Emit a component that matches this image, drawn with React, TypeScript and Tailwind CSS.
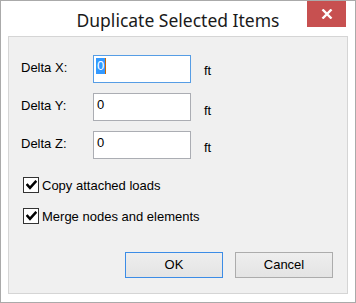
import { useState } from 'react';

const rows = [
  { label: 'Delta X:', value: '0', ftTop: 'mt-[8px]' },
  { label: 'Delta Y:', value: '0', ftTop: 'mt-[10px]' },
  { label: 'Delta Z:', value: '0', ftTop: 'mt-[9px]' },
];

const Check = () => (
  <svg width="11" height="10" viewBox="0 0 11 10" className="block">
    <path d="M1.5 5 L4 7.8 L9.5 1.8" fill="none" stroke="#000" strokeWidth="2.6" strokeLinecap="square" />
  </svg>
);

const CheckRow = ({ label, className }: { label: string; className?: string }) => {
  const [on, setOn] = useState(true);
  return (
    <label className={`flex items-center cursor-default select-none ${className ?? ''}`} onClick={() => setOn(!on)}>
      <span className="w-[16px] h-[16px] border border-[#333] bg-white flex items-center justify-center">
        {on && <Check />}
      </span>
      <span className="ml-[3px] text-[13px] leading-[15px]">{label}</span>
    </label>
  );
};

const App = () => {
  return (
    <div
      className="w-[356px] h-[303px] border border-[#aaaaaa] bg-white flex flex-col text-black relative"
      style={{ fontFamily: '"Liberation Sans", Arial, sans-serif' }}
    >
      {/* Title bar */}
      <div className="h-[35px] flex items-center justify-center">
        <span className="text-[17.5px] leading-[20px] mt-[3px] text-[#1a1a1a]" style={{ fontFamily: '"Noto Sans", sans-serif' }}>
          Duplicate Selected Items
        </span>
      </div>
      <button className="absolute top-0 right-[9px] w-[39px] h-[26px] bg-[#c75050] flex items-center justify-center">
        <svg width="12" height="10" viewBox="0 0 12 10">
          <path d="M1.5 0.5 L10.5 9.5 M10.5 0.5 L1.5 9.5" stroke="#fff" strokeWidth="2.4" />
        </svg>
      </button>

      {/* Client area */}
      <div className="mx-[7px] h-[258px] border border-[#d5d5d5] bg-[#f0f0f0] pl-[12px] pt-[18px] flex flex-col">
        {rows.map((row, i) => (
          <div key={row.label} className={`flex items-start h-[28px] ${i > 0 ? 'mt-[10px]' : ''}`}>
            <span className="w-[72px] mt-[5px] text-[13px] leading-[15px]">{row.label}</span>
            <div
              className={`w-[98px] h-[28px] bg-white border pl-[2px] pt-[2px] text-[13px] leading-[15px] flex items-start ${
                i === 0 ? 'border-[#569de5]' : 'border-[#abadb3]'
              }`}
            >
              {i === 0 ? (
                <>
                  <span className="bg-[#3399ff] text-white h-[16px] px-[1px]">{row.value}</span>
                  <span className="w-px h-[16px] bg-[#cc6600]" />
                </>
              ) : (
                <span className="pl-[1px] pt-[1px]">{row.value}</span>
              )}
            </div>
            <span className={`ml-[13px] text-[13px] leading-[15px] ${row.ftTop}`}>ft</span>
          </div>
        ))}

        <CheckRow label="Copy attached loads" className="mt-[18px] ml-[2px]" />
        <CheckRow label="Merge nodes and elements" className="mt-[15px] ml-[2px]" />

        <div className="flex justify-end gap-[12px] mt-[28px] pr-[14px]">
          <button className="w-[98px] h-[26px] border border-[#3c8ce6] bg-gradient-to-b from-[#eeeeee] to-[#e4e4e4] text-[13px]">
            OK
          </button>
          <button className="w-[98px] h-[26px] border border-[#acacac] bg-gradient-to-b from-[#eeeeee] to-[#e4e4e4] text-[13px]">
            Cancel
          </button>
        </div>
      </div>
    </div>
  );
};

export default App;
